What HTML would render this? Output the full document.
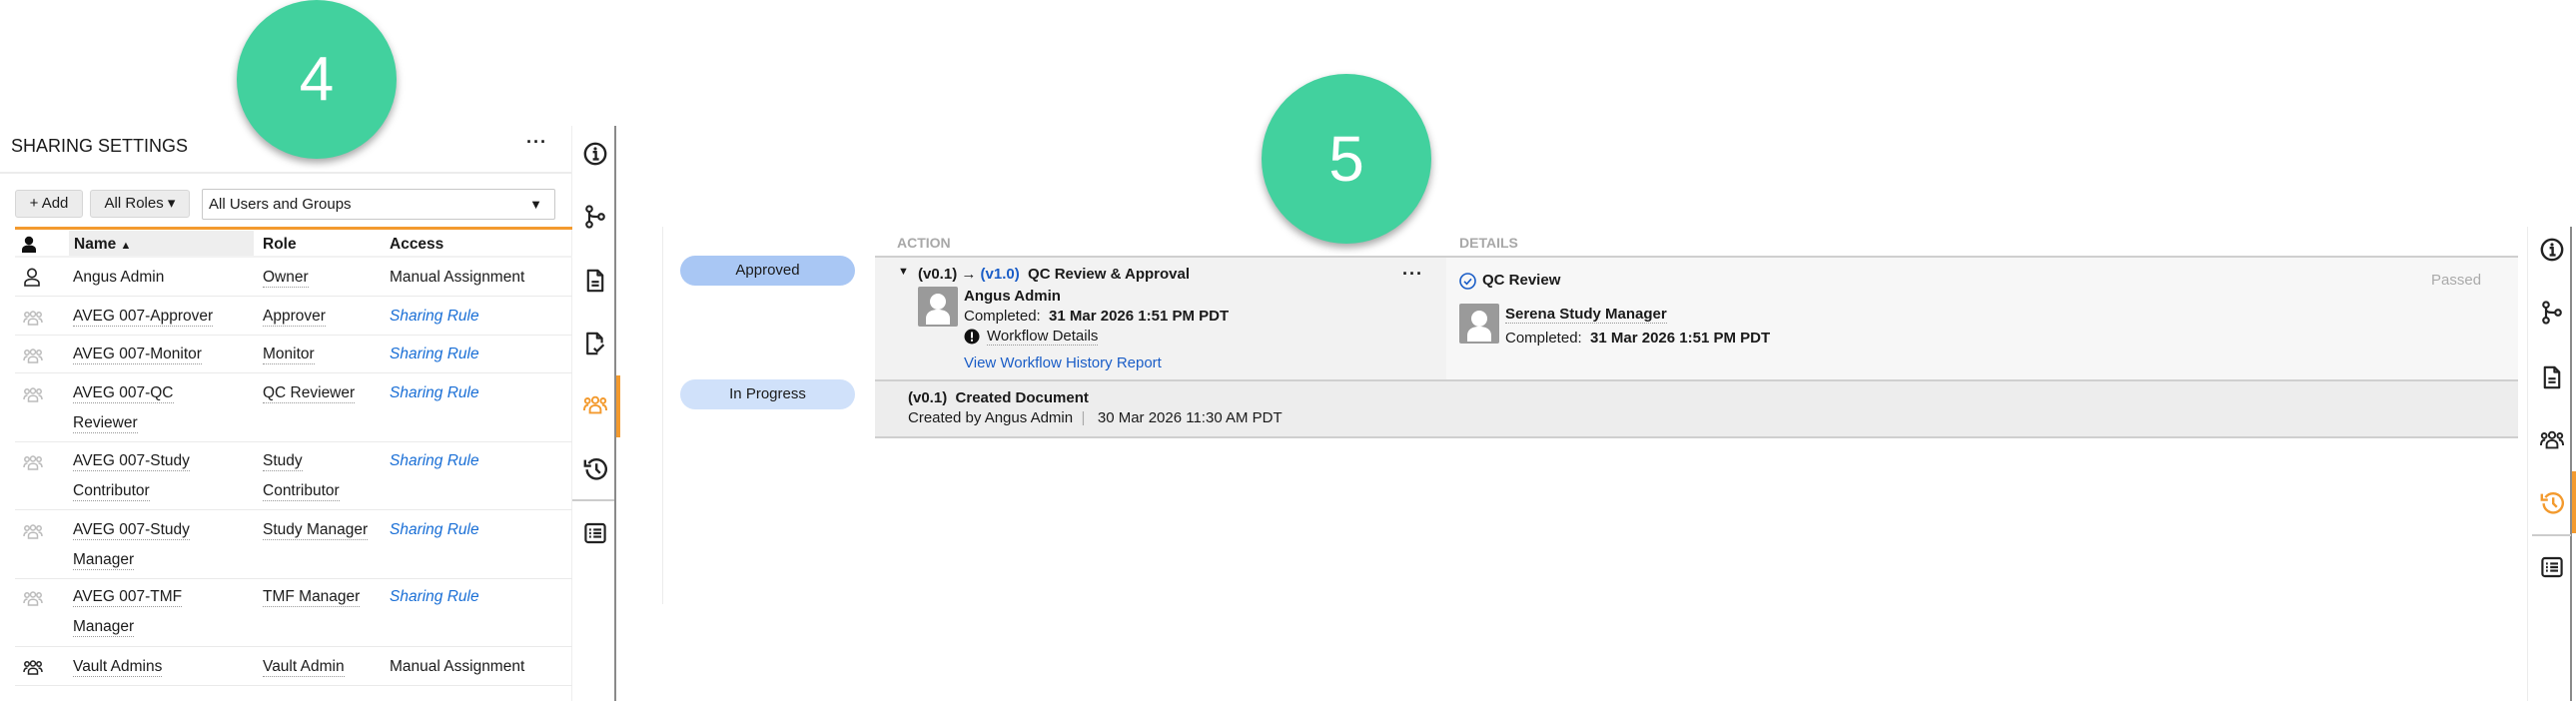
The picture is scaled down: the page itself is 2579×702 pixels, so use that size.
<!DOCTYPE html>
<html><head><meta charset="utf-8"><style>
*{margin:0;padding:0;box-sizing:border-box}
body{width:2579px;height:702px;background:#fff;font-family:"Liberation Sans",Arial,sans-serif;color:#1a1a1a;position:relative;overflow:hidden}
.a{position:absolute;white-space:nowrap}
.t{font-size:15.5px;line-height:30px}
.u{border-bottom:1px dotted #999;line-height:18px;display:inline-block}
.link{color:#1a6fd6;font-style:italic}
.rl{position:absolute;left:15px;width:558px;height:1px;background:#eaeaea}
.circ{position:absolute;border-radius:50%;background:#42d19e;box-shadow:0 4px 8px rgba(0,0,0,.35);color:#fff;text-align:center;font-family:"Liberation Sans",sans-serif}
svg{position:absolute}
.b{font-weight:bold}
.r{font-size:15px}
</style></head><body>

<!-- LEFT PANEL -->
<div class="a" style="left:11px;top:136px;font-size:18px;">SHARING SETTINGS</div>
<div class="a" style="left:527px;top:132px;font-size:18px;font-weight:bold;letter-spacing:1px">···</div>
<div class="a" style="left:0;top:172px;width:573px;height:2px;background:#ececec"></div>
<div class="a" style="left:572px;top:126px;width:1px;height:576px;background:#eee"></div>

<div class="a" style="left:15px;top:190px;width:68px;height:28px;background:#ececec;border:1px solid #d6d6d6;border-radius:3px;font-size:15px;line-height:26px;text-align:center">+ Add</div>
<div class="a" style="left:90px;top:190px;width:100px;height:28px;background:#ececec;border:1px solid #d6d6d6;border-radius:3px;font-size:15px;line-height:26px;text-align:center">All Roles ▾</div>
<div class="a" style="left:202px;top:189px;width:354px;height:31px;background:#fff;border:1px solid #c8c8c8;border-radius:2px;font-size:15px;line-height:29px;padding-left:6px">All Users and Groups<span style="position:absolute;right:12px;font-size:13px">▼</span></div>
<div class="a" style="left:15px;top:227px;width:558px;height:3px;background:#f39a2e"></div>

<div class="a" style="left:69px;top:231px;width:185px;height:25px;background:#eeeeee"></div>
<div class="a" style="left:15px;top:256px;width:558px;height:2px;background:#f2f2f2"></div>
<svg style="left:21px;top:236px" width="16" height="18" viewBox="0 0 16 18"><circle cx="8" cy="5" r="4.2" fill="#111"/><path d="M1 17v-3c0-3 3-4.5 7-4.5s7 1.5 7 4.5v3z" fill="#111"/></svg>
<div class="a b t" style="left:74px;top:230px">Name <span style="font-size:11px">▲</span></div>
<div class="a b t" style="left:263px;top:230px">Role</div>
<div class="a b t" style="left:390px;top:230px">Access</div>

<svg style="left:23px;top:268px" width="18" height="20" viewBox="0 0 18 20"><circle cx="9" cy="5.5" r="4.2" fill="none" stroke="#222" stroke-width="1.6"/><path d="M2 18v-2.5c0-2.5 3-4 7-4s7 1.5 7 4V18z" fill="none" stroke="#222" stroke-width="1.6"/></svg>
<div class="a t" style="left:73px;top:263px">Angus Admin</div>
<div class="a t" style="left:263px;top:263px"><span class="u">Owner</span></div>
<div class="a t" style="left:390px;top:263px">Manual Assignment</div>
<div class="rl" style="top:296px"></div>

<div class="a t" style="left:73px;top:302px"><span class="u">AVEG 007-Approver</span></div>
<div class="a t" style="left:263px;top:302px"><span class="u">Approver</span></div>
<div class="a t link" style="left:390px;top:302px">Sharing Rule</div>
<div class="rl" style="top:335px"></div>

<div class="a t" style="left:73px;top:340px"><span class="u">AVEG 007-Monitor</span></div>
<div class="a t" style="left:263px;top:340px"><span class="u">Monitor</span></div>
<div class="a t link" style="left:390px;top:340px">Sharing Rule</div>
<div class="rl" style="top:373px"></div>

<div class="a t" style="left:73px;top:379px"><span class="u">AVEG 007-QC</span><br><span class="u">Reviewer</span></div>
<div class="a t" style="left:263px;top:379px"><span class="u">QC Reviewer</span></div>
<div class="a t link" style="left:390px;top:379px">Sharing Rule</div>
<div class="rl" style="top:442px"></div>

<div class="a t" style="left:73px;top:447px"><span class="u">AVEG 007-Study</span><br><span class="u">Contributor</span></div>
<div class="a t" style="left:263px;top:447px"><span class="u">Study</span><br><span class="u">Contributor</span></div>
<div class="a t link" style="left:390px;top:447px">Sharing Rule</div>
<div class="rl" style="top:510px"></div>

<div class="a t" style="left:73px;top:516px"><span class="u">AVEG 007-Study</span><br><span class="u">Manager</span></div>
<div class="a t" style="left:263px;top:516px"><span class="u">Study Manager</span></div>
<div class="a t link" style="left:390px;top:516px">Sharing Rule</div>
<div class="rl" style="top:579px"></div>

<div class="a t" style="left:73px;top:583px"><span class="u">AVEG 007-TMF</span><br><span class="u">Manager</span></div>
<div class="a t" style="left:263px;top:583px"><span class="u">TMF Manager</span></div>
<div class="a t link" style="left:390px;top:583px">Sharing Rule</div>
<div class="rl" style="top:647px"></div>

<div class="a t" style="left:73px;top:653px"><span class="u">Vault Admins</span></div>
<div class="a t" style="left:263px;top:653px"><span class="u">Vault Admin</span></div>
<div class="a t" style="left:390px;top:653px">Manual Assignment</div>
<div class="rl" style="top:686px"></div>

<svg width="0" height="0"><defs><g id="grp"><circle cx="4" cy="4" r="2.2" fill="none" stroke-width="1.5"/><circle cx="10" cy="3.5" r="2.5" fill="none" stroke-width="1.5"/><circle cx="16" cy="4" r="2.2" fill="none" stroke-width="1.5"/><path d="M1 12c0-3 1.5-4 3.5-4M19 12c0-3-1.5-4-3.5-4M5.5 14v-2.5c0-2 2-3.2 4.5-3.2s4.5 1.2 4.5 3.2V14z" fill="none" stroke-width="1.5"/></g></defs></svg>
<svg style="left:23px;top:311px" width="20" height="15" viewBox="0 0 20 15" stroke="#bbb"><use href="#grp"/></svg>
<svg style="left:23px;top:349px" width="20" height="15" viewBox="0 0 20 15" stroke="#bbb"><use href="#grp"/></svg>
<svg style="left:23px;top:388px" width="20" height="15" viewBox="0 0 20 15" stroke="#bbb"><use href="#grp"/></svg>
<svg style="left:23px;top:456px" width="20" height="15" viewBox="0 0 20 15" stroke="#bbb"><use href="#grp"/></svg>
<svg style="left:23px;top:525px" width="20" height="15" viewBox="0 0 20 15" stroke="#bbb"><use href="#grp"/></svg>
<svg style="left:23px;top:592px" width="20" height="15" viewBox="0 0 20 15" stroke="#bbb"><use href="#grp"/></svg>
<svg style="left:23px;top:661px" width="20" height="15" viewBox="0 0 20 15" stroke="#222"><use href="#grp"/></svg>

<svg width="0" height="0"><defs>
<g id="info"><circle cx="10" cy="10" r="8.5" fill="none" stroke-width="2"/><circle cx="10" cy="5.8" r="1.3" stroke="none" fill="currentColor"/><path d="M8 8.5h2.5v6M8 14.5h5" fill="none" stroke-width="2"/></g>
<g id="branch"><circle cx="5" cy="3.5" r="2.3" fill="none" stroke-width="1.8"/><circle cx="5" cy="16.5" r="2.3" fill="none" stroke-width="1.8"/><circle cx="15" cy="10" r="2.3" fill="none" stroke-width="1.8"/><path d="M5 6v8M5 7c0 3 3 3 7.8 3" fill="none" stroke-width="1.8"/></g>
<g id="doc"><path d="M4 1.5h8l4 4v13H4z M12 1.5v4h4" fill="none" stroke-width="1.8" stroke-linejoin="round"/><path d="M7 11h6M7 14h6" stroke-width="1.8"/></g>
<g id="docchk"><path d="M12 18.5H3.5v-17h8l4 4v4 M11.5 1.5v4h4" fill="none" stroke-width="1.8" stroke-linejoin="round"/><path d="M9 14l2.5 2.5L17 11" fill="none" stroke-width="1.8"/></g>
<g id="hist"><path d="M4.5 6A8 8 0 1 1 3 11" fill="none" stroke-width="2"/><path d="M1.5 3v5h5" fill="none" stroke-width="2"/><path d="M11 6v5l3 3" fill="none" stroke-width="2"/></g>
<g id="list"><rect x="2" y="2.5" width="16" height="15" rx="2" fill="none" stroke-width="1.8"/><path d="M5 7h1.5M5 10h1.5M5 13h1.5M8.5 7h6.5M8.5 10h6.5M8.5 13h6.5" stroke-width="1.8"/></g>
<g id="grp2"><circle cx="3.5" cy="6" r="2" fill="none" stroke-width="1.6"/><circle cx="10" cy="5.5" r="2.6" fill="none" stroke-width="1.6"/><circle cx="16.5" cy="6" r="2" fill="none" stroke-width="1.6"/><path d="M0.8 14c0-3 1.2-4.5 3.5-4.5M19.2 14c0-3-1.2-4.5-3.5-4.5M5.5 16v-2.5c0-2.3 2-3.7 4.5-3.7s4.5 1.4 4.5 3.7V16z" fill="none" stroke-width="1.6"/></g>
</defs></svg>
<div class="a" style="left:615px;top:126px;width:2px;height:576px;background:#8a8a8a"></div>
<svg style="left:584px;top:142px;color:#222" width="24" height="24" viewBox="0 0 20 20" stroke="#222"><use href="#info"/></svg>
<svg style="left:584px;top:205px" width="24" height="24" viewBox="0 0 20 20" stroke="#222"><use href="#branch"/></svg>
<svg style="left:584px;top:269px" width="24" height="24" viewBox="0 0 20 20" stroke="#222"><use href="#doc"/></svg>
<svg style="left:584px;top:332px" width="24" height="24" viewBox="0 0 20 20" stroke="#222"><use href="#docchk"/></svg>
<svg style="left:584px;top:394px" width="24" height="22" viewBox="0 0 20 18" stroke="#f39a2e"><use href="#grp2"/></svg>
<div class="a" style="left:617px;top:376px;width:4px;height:62px;background:#f39a2e"></div>
<svg style="left:584px;top:457px" width="24" height="24" viewBox="0 0 20 20" stroke="#222"><use href="#hist"/></svg>
<div class="a" style="left:573px;top:500px;width:42px;height:2px;background:#ccc"></div>
<svg style="left:584px;top:522px" width="24" height="24" viewBox="0 0 20 20" stroke="#222"><use href="#list"/></svg>

<div class="circ" style="left:237px;top:0px;width:160px;height:159px;font-size:62px;line-height:159px">4</div>

<!-- RIGHT PANEL -->
<div class="a" style="left:663px;top:227px;width:1px;height:378px;background:#ececec"></div>
<div class="a" style="left:898px;top:235px;font-size:14px;font-weight:bold;color:#a8a8a8">ACTION</div>
<div class="a" style="left:1461px;top:235px;font-size:14px;font-weight:bold;color:#a8a8a8">DETAILS</div>
<div class="a" style="left:876px;top:256px;width:1645px;height:2px;background:#cfcfcf"></div>
<div class="a" style="left:876px;top:258px;width:1645px;height:123px;background:#f2f2f2"></div>
<div class="a" style="left:1448px;top:258px;width:1073px;height:123px;background:#f7f7f7"></div>
<div class="a" style="left:876px;top:380px;width:1645px;height:2px;background:#cfcfcf"></div>
<div class="a" style="left:876px;top:382px;width:1645px;height:55px;background:#ededed"></div>
<div class="a" style="left:876px;top:437px;width:1645px;height:2px;background:#cfcfcf"></div>

<div class="a" style="left:681px;top:256px;width:175px;height:30px;border-radius:15px;background:#a9c7f4;font-size:15px;line-height:30px;text-align:center">Approved</div>
<div class="a" style="left:681px;top:380px;width:175px;height:30px;border-radius:15px;background:#d0e1fa;font-size:15px;line-height:30px;text-align:center">In Progress</div>

<div class="a r" style="left:899px;top:266px;font-size:11px">▼</div>
<div class="a r b" style="left:919px;top:266px">(v0.1) <span style="font-weight:normal">→</span> <span style="color:#1a5dc7">(v1.0)</span>&nbsp; QC Review &amp; Approval</div>
<div class="a" style="left:1404px;top:264px;font-size:18px;font-weight:bold;letter-spacing:1px">···</div>
<svg style="left:919px;top:287px" width="40" height="40" viewBox="0 0 40 40"><rect width="40" height="40" rx="2" fill="#9a9a9a"/><circle cx="20" cy="15" r="8" fill="#fff"/><path d="M8 38v-6c0-6 5-9 12-9s12 3 12 9v6z" fill="#fff"/></svg>
<div class="a r b" style="left:965px;top:288px">Angus Admin</div>
<div class="a r" style="left:965px;top:308px">Completed:&nbsp; <b>31 Mar 2026 1:51 PM PDT</b></div>
<svg style="left:965px;top:329px" width="16" height="16" viewBox="0 0 16 16"><circle cx="8" cy="8" r="7.5" fill="#111"/><rect x="7" y="3.5" width="2" height="6" fill="#fff"/><rect x="7" y="10.8" width="2" height="2" fill="#fff"/></svg>
<div class="a r" style="left:988px;top:328px"><span class="u" style="line-height:17px">Workflow Details</span></div>
<div class="a r" style="left:965px;top:355px;color:#1a5dc7">View Workflow History Report</div>

<div class="a r b" style="left:909px;top:390px">(v0.1)&nbsp; Created Document</div>
<div class="a r" style="left:909px;top:410px">Created by Angus Admin &nbsp;<span style="color:#aaa">|</span>&nbsp;&nbsp; 30 Mar 2026 11:30 AM PDT</div>

<svg style="left:1461px;top:273px" width="17" height="17" viewBox="0 0 17 17"><circle cx="8.5" cy="8.5" r="7.5" fill="none" stroke="#1a5dc7" stroke-width="1.6"/><path d="M5 8.8l2.5 2.5 4.5-5" fill="none" stroke="#1a5dc7" stroke-width="1.6"/></svg>
<div class="a r b" style="left:1484px;top:272px">QC Review</div>
<div class="a r" style="left:2434px;top:272px;color:#aaa">Passed</div>
<svg style="left:1461px;top:304px" width="40" height="40" viewBox="0 0 40 40"><rect width="40" height="40" rx="2" fill="#9a9a9a"/><circle cx="20" cy="15" r="8" fill="#fff"/><path d="M8 38v-6c0-6 5-9 12-9s12 3 12 9v6z" fill="#fff"/></svg>
<div class="a r b" style="left:1507px;top:306px"><span class="u" style="line-height:17px">Serena Study Manager</span></div>
<div class="a r" style="left:1507px;top:330px">Completed:&nbsp; <b>31 Mar 2026 1:51 PM PDT</b></div>

<!-- right sidebar -->
<div class="a" style="left:2530px;top:227px;width:1px;height:475px;background:#ececec"></div>
<div class="a" style="left:2573px;top:227px;width:2px;height:475px;background:#8a8a8a"></div>
<svg style="left:2543px;top:238px;color:#222" width="24" height="24" viewBox="0 0 20 20" stroke="#222"><use href="#info"/></svg>
<svg style="left:2543px;top:301px" width="24" height="24" viewBox="0 0 20 20" stroke="#222"><use href="#branch"/></svg>
<svg style="left:2543px;top:366px" width="24" height="24" viewBox="0 0 20 20" stroke="#222"><use href="#doc"/></svg>
<svg style="left:2543px;top:429px" width="24" height="22" viewBox="0 0 20 18" stroke="#222"><use href="#grp2"/></svg>
<svg style="left:2543px;top:491px" width="24" height="24" viewBox="0 0 20 20" stroke="#f39a2e"><use href="#hist"/></svg>
<div class="a" style="left:2575px;top:472px;width:4px;height:62px;background:#f39a2e"></div>
<div class="a" style="left:2535px;top:535px;width:39px;height:2px;background:#ccc"></div>
<svg style="left:2543px;top:556px" width="24" height="24" viewBox="0 0 20 20" stroke="#222"><use href="#list"/></svg>

<div class="circ" style="left:1263px;top:74px;width:170px;height:170px;font-size:64px;line-height:170px">5</div>
</body></html>
